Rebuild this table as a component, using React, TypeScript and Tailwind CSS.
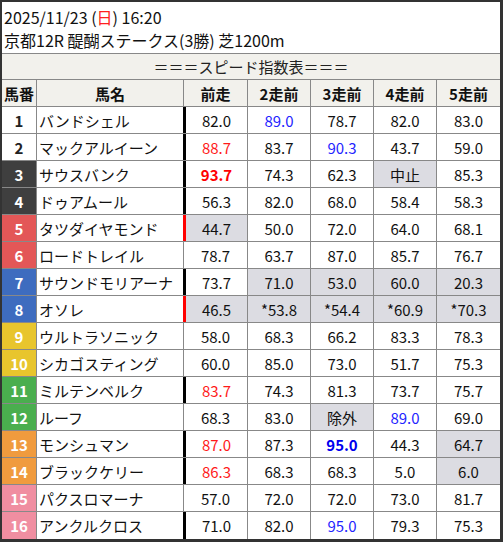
const font = { fontFamily: '"Noto Sans CJK JP", "Noto Sans", sans-serif' }

type Row = { n: number; name: string; bar: "" | "k" | "r"; v: string[] }

// value syntax: "82.0|b" -> b blue, B bold blue, r red, R bold red, g gray cell
const rows: Row[] = [
  { n: 1, name: "バンドシェル", bar: "k", v: ["82.0", "89.0|b", "78.7", "82.0", "83.0"] },
  { n: 2, name: "マックアルイーン", bar: "k", v: ["88.7|r", "83.7", "90.3|b", "43.7", "59.0"] },
  { n: 3, name: "サウスバンク", bar: "k", v: ["93.7|R", "74.3", "62.3", "中止|g", "85.3"] },
  { n: 4, name: "ドゥアムール", bar: "k", v: ["56.3", "82.0", "68.0", "58.4", "58.3"] },
  { n: 5, name: "タツダイヤモンド", bar: "r", v: ["44.7|g", "50.0", "72.0", "64.0", "68.1"] },
  { n: 6, name: "ロードトレイル", bar: "", v: ["78.7", "63.7", "87.0", "85.7", "76.7"] },
  { n: 7, name: "サウンドモリアーナ", bar: "k", v: ["73.7", "71.0|g", "53.0|g", "60.0|g", "20.3|g"] },
  { n: 8, name: "オソレ", bar: "r", v: ["46.5|g", "*53.8|g", "*54.4|g", "*60.9|g", "*70.3|g"] },
  { n: 9, name: "ウルトラソニック", bar: "", v: ["58.0", "68.3", "66.2", "83.3", "78.3"] },
  { n: 10, name: "シカゴスティング", bar: "", v: ["60.0", "85.0", "73.0", "51.7", "75.3"] },
  { n: 11, name: "ミルテンベルク", bar: "k", v: ["83.7|r", "74.3", "81.3", "73.7", "75.7"] },
  { n: 12, name: "ルーフ", bar: "", v: ["68.3", "83.0", "除外|g", "89.0|b", "69.0"] },
  { n: 13, name: "モンシュマン", bar: "k", v: ["87.0|r", "87.3", "95.0|B", "44.3", "64.7|g"] },
  { n: 14, name: "ブラックケリー", bar: "k", v: ["86.3|r", "68.3", "68.3", "5.0", "6.0|g"] },
  { n: 15, name: "パクスロマーナ", bar: "", v: ["57.0", "72.0", "72.0", "73.0", "81.7"] },
  { n: 16, name: "アンクルクロス", bar: "k", v: ["71.0", "82.0", "95.0|b", "79.3", "75.3"] },
]

const numBg: Record<number, string> = {
  1: "bg-white text-[#222]",
  2: "bg-white text-[#222]",
  3: "bg-[#3f3f3f] text-white",
  4: "bg-[#3f3f3f] text-white",
  5: "bg-[#e35757] text-white",
  6: "bg-[#e35757] text-white",
  7: "bg-[#3e6cbf] text-white",
  8: "bg-[#3e6cbf] text-white",
  9: "bg-[#e8c52d] text-white",
  10: "bg-[#e8c52d] text-white",
  11: "bg-[#4aae4e] text-white",
  12: "bg-[#4aae4e] text-white",
  13: "bg-[#f09b3e] text-white",
  14: "bg-[#f09b3e] text-white",
  15: "bg-[#f08ea1] text-white",
  16: "bg-[#f08ea1] text-white",
}

const cellStyle: Record<string, string> = {
  "": "text-[#111]",
  b: "text-[#2323ff]",
  B: "text-[#0000ee] font-bold",
  r: "text-[#ff1a1a]",
  R: "text-[#ff0000] font-bold",
  g: "text-[#111] bg-[#dcdce2]",
}

const cols = "grid grid-cols-[35px_147px_64px_63px_63px_63px_63px]"

export default function App() {
  return (
    <div
      className="w-[503px] h-[542px] bg-white border-t-2 border-l-2 border-r-[3px] border-b-[3px] border-[#333] text-[15px] leading-none"
      style={font}
    >
      <div className="h-[52px] border-b border-[#888] px-[2px] pt-[4px] text-[16px] text-[#111]">
        <div className="h-[23px] leading-[23px]">
          2025/11/23 (<span className="text-[#ff2020]">日</span>) 16:20
        </div>
        <div className="h-[23px] leading-[23px]">京都12R 醍醐ステークス(3勝) 芝1200m</div>
      </div>
      <div className="h-[26px] border-b border-[#888] bg-[#f2f1ec] flex items-center justify-center text-[#222]">
        ＝＝＝スピード指数表＝＝＝
      </div>
      <div className={`${cols} h-[27px] border-b border-[#888] bg-[#f2f1ec] font-bold text-[#111]`}>
        {["馬番", "馬名", "前走", "2走前", "3走前", "4走前", "5走前"].map((h, i) => (
          <div
            key={h}
            className={`flex items-center justify-center ${i < 6 ? "border-r border-[#888]" : ""}`}
          >
            {h}
          </div>
        ))}
      </div>
      {rows.map((r) => (
        <div key={r.n} className={`${cols} h-[27px] border-b border-[#888] last:border-b-0`}>
          <div className={`flex items-center justify-center border-r border-[#888] font-bold ${numBg[r.n]}`}>
            {r.n}
          </div>
          <div
            className={`flex items-center pl-[2px] border-r text-[#111] ${
              r.bar === "k" ? "border-r-black" : r.bar === "r" ? "border-r-[#ff0000]" : "border-r-[#888]"
            }`}
          >
            {r.name}
          </div>
          {r.v.map((v, i) => {
            const [text, s = ""] = v.split("|")
            const bar =
              i === 0
                ? r.bar === "k"
                  ? "border-l-2 border-l-black"
                  : r.bar === "r"
                  ? "border-l-2 border-l-[#ff0000]"
                  : ""
                : ""
            return (
              <div
                key={i}
                className={`flex items-center justify-center ${i < 4 ? "border-r border-[#888]" : ""} ${bar} ${cellStyle[s]}`}
              >
                {text}
              </div>
            )
          })}
        </div>
      ))}
    </div>
  )
}
